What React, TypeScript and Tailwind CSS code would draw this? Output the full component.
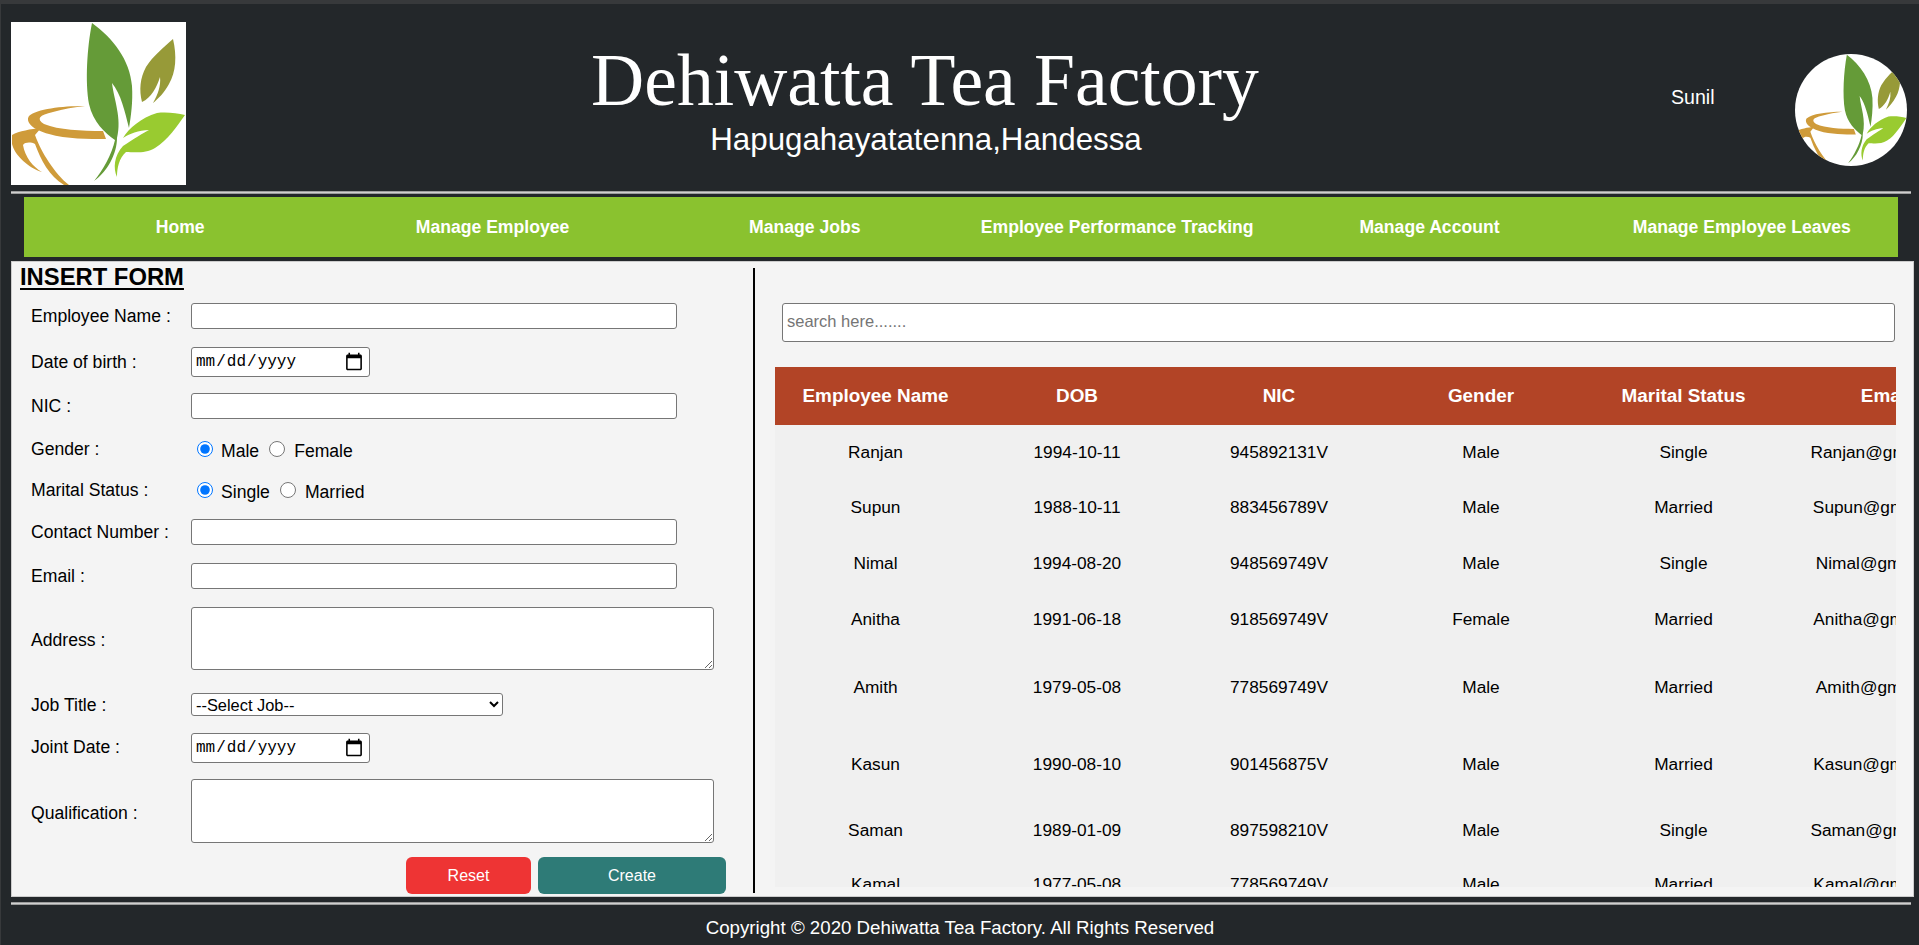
import type { ReactNode } from 'react'

const navItems = ['Home', 'Manage Employee', 'Manage Jobs', 'Employee Performance Tracking', 'Manage Account', 'Manage Employee Leaves']

const rows = [
  { name: 'Ranjan', dob: '1994-10-11', nic: '945892131V', gender: 'Male', status: 'Single', email: 'Ranjan@gmail.com', height: 'h-[55px]' },
  { name: 'Supun', dob: '1988-10-11', nic: '883456789V', gender: 'Male', status: 'Married', email: 'Supun@gmail.com', height: 'h-[56px]' },
  { name: 'Nimal', dob: '1994-08-20', nic: '948569749V', gender: 'Male', status: 'Single', email: 'Nimal@gmail.com', height: 'h-[56px]' },
  { name: 'Anitha', dob: '1991-06-18', nic: '918569749V', gender: 'Female', status: 'Married', email: 'Anitha@gmail.com', height: 'h-[56px]' },
  { name: 'Amith', dob: '1979-05-08', nic: '778569749V', gender: 'Male', status: 'Married', email: 'Amith@gmail.com', height: 'h-[80px]' },
  { name: 'Kasun', dob: '1990-08-10', nic: '901456875V', gender: 'Male', status: 'Married', email: 'Kasun@gmail.com', height: 'h-[74px]' },
  { name: 'Saman', dob: '1989-01-09', nic: '897598210V', gender: 'Male', status: 'Single', email: 'Saman@gmail.com', height: 'h-[58px]' },
  { name: 'Kamal', dob: '1977-05-08', nic: '778569749V', gender: 'Male', status: 'Married', email: 'Kamal@gmail.com', height: 'h-[50px]' },
]

const textInput = 'w-[486px] h-[26px] bg-white border border-[#767676] rounded-[3px] px-[2px]'
const dateInput = "w-[179px] h-[30px] bg-white border border-[#767676] rounded-[3px] pl-[3px] pr-[5px] text-[16px] font-['Liberation_Mono',monospace] [&::-webkit-calendar-picker-indicator]:w-[20px] [&::-webkit-calendar-picker-indicator]:h-[20px] [&::-webkit-calendar-picker-indicator]:p-0 [&::-webkit-calendar-picker-indicator]:m-0"
const areaInput = 'w-[523px] bg-white border border-[#767676] rounded-[3px] block'

function Logo({ className }: { className: string }) {
  return (
    <svg viewBox="0 0 175 163" preserveAspectRatio="none" className={className}>
      <rect width="175" height="163" fill="#fff" />
      {/* cup */}
      <path d="M74 84 C50 84 26 87 18 94 C14 100 22 108 38 112 C55 117 78 117 95 117 L92 109 C70 109 48 108 33 102 C25 97 28 93 42 90 C52 87 64 85 74 84 Z" fill="#cf9b3a" />
      <path d="M1 113 C8 109 20 107 30 106 L24 113 C30 130 44 152 58 163 L53 163 C38 154 30 138 24 122 C20 120 14 120 12 123 C14 135 22 145 31 150 C18 146 4 134 1 122 Z" fill="#cf9b3a" />
      {/* big leaf */}
      <path d="M81 1 C102 16 119 38 121 64 C122 80 120 94 118 106 C114 90 110 72 101 61 C103 78 111 96 106 116 C106 132 96 150 83 159 C92 148 101 132 104 118 C94 111 82 100 78 82 C74 60 76 26 81 1 Z" fill="#659b38" />
      {/* olive leaf */}
      <path d="M162 17 C166 34 165 50 158 62 C153 71 147 77 142 81 C147 72 150 64 149 55 C146 65 140 76 131 80 C128 68 129 56 135 45 C142 34 153 25 162 17 Z" fill="#979a38" />
      {/* light leaf */}
      <path d="M174 93 C166 104 157 118 144 126 C134 132 122 130 115 130 C108 136 106 146 106 155 C102 146 103 134 112 124 C121 118 134 110 138 108 C128 108 118 112 112 116 C118 106 130 96 146 91 C155 90 166 91 174 93 Z" fill="#99cb30" />
    </svg>
  )
}

function Row({ label, className, labelClass = '', children }: { label: string; className: string; labelClass?: string; children: ReactNode }) {
  return (
    <div className={`flex items-center pl-[19px] ${className}`}>
      <label className={`w-[160px] shrink-0 text-[17.6px] leading-[20px] text-black ${labelClass}`}>{label}</label>
      {children}
    </div>
  )
}

function Rule() {
  return <div className="ml-[10px] w-[1900px] h-[3px] bg-[#cfcfcf] border-y border-[#9c9c9c]" />
}

export default function App() {
  return (
    <div className="h-[945px] w-full overflow-hidden bg-[#23272a] border-t-4 border-l border-[#37393b] font-['Liberation_Sans',Arial,sans-serif]">
      {/* header */}
      <div className="flex pl-[10px] pt-[18px] h-[187px]">
        <Logo className="w-[175px] h-[163px] shrink-0" />
        <div className="w-[1478px] flex flex-col items-center text-white">
          <h1 className="text-[73.6px] leading-[80px] mt-[18px] font-['Liberation_Serif',serif]">Dehiwatta Tea Factory</h1>
          <p className="text-[31.3px] leading-[36px] mt-[2px] ml-[2px]">Hapugahayatatenna,Handessa</p>
        </div>
        <div className="w-[131px] pl-[7px] pt-[63px] text-[19.6px] leading-[24px] text-white">Sunil</div>
        <div className="w-[112px] h-[112px] mt-[32px] rounded-full overflow-hidden">
          <Logo className="w-[112px] h-[112px]" />
        </div>
      </div>
      <Rule />

      {/* nav */}
      <div className="ml-[23px] mt-[3px] w-[1874px] h-[60px] grid grid-cols-6 items-center bg-[#8ac22f]">
        {navItems.map((item) => (
          <a key={item} className="text-center text-[17.6px] font-bold text-white">{item}</a>
        ))}
      </div>

      {/* main panel */}
      <div className="ml-[10px] mt-[4px] w-[1903px] h-[636px] flex bg-[#f4f4f4] border border-[#cccccc]">
        <div className="w-[741px] shrink-0">
          <div className="h-[41px] pl-[8px] pt-[1px]">
            <h2 className="text-[23.8px] leading-[28px] font-bold text-black underline underline-offset-[3px]">INSERT FORM</h2>
          </div>
          <Row label="Employee Name :" className="">
            <input type="text" className={textInput} />
          </Row>
          <Row label="Date of birth :" className="mt-[18px]">
            <input type="date" className={dateInput} />
          </Row>
          <Row label="NIC :" className="mt-[16px]">
            <input type="text" className={textInput} />
          </Row>
          <Row label="Gender :" className="mt-[17px] h-[26px]">
            <input type="radio" name="gender" defaultChecked className="ml-[6px] w-4 h-4 accent-[#0075ff]" />
            <span className="ml-[8px] mt-[4px] text-[17.6px] leading-[20px] text-black">Male</span>
            <input type="radio" name="gender" className="ml-[10px] w-4 h-4 accent-[#0075ff]" />
            <span className="ml-[9px] mt-[4px] text-[17.6px] leading-[20px] text-black">Female</span>
          </Row>
          <Row label="Marital Status :" className="mt-[15px] h-[26px]">
            <input type="radio" name="marital" defaultChecked className="ml-[6px] w-4 h-4 accent-[#0075ff]" />
            <span className="ml-[8px] mt-[4px] text-[17.6px] leading-[20px] text-black">Single</span>
            <input type="radio" name="marital" className="ml-[10px] w-4 h-4 accent-[#0075ff]" />
            <span className="ml-[9px] mt-[4px] text-[17.6px] leading-[20px] text-black">Married</span>
          </Row>
          <Row label="Contact Number :" className="mt-[16px]">
            <input type="text" className={textInput} />
          </Row>
          <Row label="Email :" className="mt-[18px]">
            <input type="text" className={textInput} />
          </Row>
          <Row label="Address :" className="mt-[18px]" labelClass="pt-[3px]">
            <textarea className={`${areaInput} h-[63px]`} />
          </Row>
          <Row label="Job Title :" className="mt-[23px]">
            <select className="w-[312px] h-[23px] bg-white border border-[#767676] rounded-[3px] text-[16.4px] text-black">
              <option>--Select Job--</option>
            </select>
          </Row>
          <Row label="Joint Date :" className="mt-[17px]" labelClass="pb-[2px]">
            <input type="date" className={dateInput} />
          </Row>
          <Row label="Qualification :" className="mt-[16px]" labelClass="pt-[3px]">
            <textarea className={`${areaInput} h-[64px]`} />
          </Row>
          <div className="flex mt-[14px] pl-[394px] gap-[7px] text-[16px] text-white">
            <button className="w-[125px] h-[37px] rounded-[6px] bg-[#ee3434]">Reset</button>
            <button className="w-[188px] h-[37px] rounded-[6px] bg-[#2e7b77]">Create</button>
          </div>
        </div>

        <div className="w-[2px] h-[625px] mt-[6px] shrink-0 bg-black" />

        {/* employee table */}
        <div className="flex-1 pl-[20px]">
          <input
            type="text"
            placeholder="search here......."
            className="block ml-[7px] mt-[41px] w-[1113px] h-[39px] bg-white border border-[#767676] rounded-[3px] px-[4px] pb-[2px] text-[16.5px] placeholder:text-[#757575]"
          />
          <div className="mt-[25px] w-[1121px] h-[520px] overflow-hidden bg-[#f0f0f0]">
            <table className="w-[1212px] table-fixed border-collapse text-center text-[17.3px] text-black">
              <thead>
                <tr className="h-[58px] bg-[#b24426] text-white font-bold text-[18.9px]">
                  <th className="w-[201px] font-bold">Employee Name</th>
                  <th className="w-[202px] font-bold">DOB</th>
                  <th className="w-[202px] font-bold">NIC</th>
                  <th className="w-[202px] font-bold">Gender</th>
                  <th className="w-[203px] font-bold">Marital Status</th>
                  <th className="w-[202px] font-bold">Email</th>
                </tr>
              </thead>
              <tbody>
                {rows.map((r) => (
                  <tr key={r.name} className={r.height}>
                    <td>{r.name}</td>
                    <td>{r.dob}</td>
                    <td>{r.nic}</td>
                    <td>{r.gender}</td>
                    <td>{r.status}</td>
                    <td>{r.email}</td>
                  </tr>
                ))}
              </tbody>
            </table>
          </div>
        </div>
      </div>

      {/* footer */}
      <div className="mt-[5px]">
        <Rule />
      </div>
      <p className="mt-[12px] text-center text-[18.7px] leading-[22px] text-white">Copyright © 2020 Dehiwatta Tea Factory. All Rights Reserved</p>
    </div>
  )
}
